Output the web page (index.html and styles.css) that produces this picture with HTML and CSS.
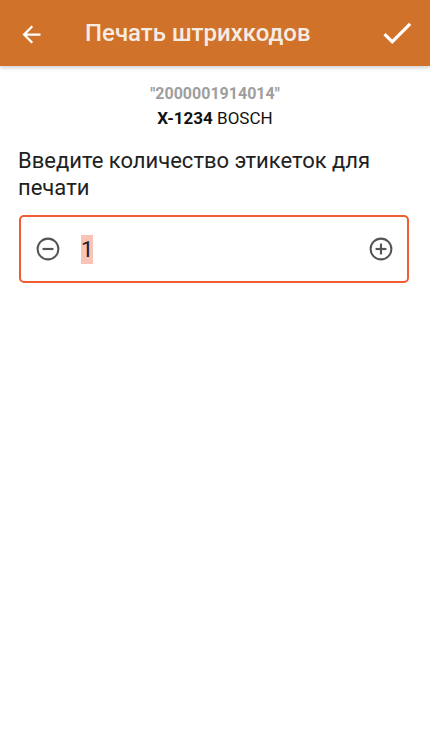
FILE: index.html
```html
<!DOCTYPE html>
<html lang="ru">

<head>
    <meta charset="UTF-8">
    <title>Печать штрихкодов</title>
    <link rel="stylesheet" href="styles.css">
</head>

<body>
    <div class="toolbar">
        <button class="toolbar-btn back-btn" type="button">
            <svg width="27" height="27" viewBox="0 0 24 24">
                <path d="M20 11H7.83l5.59-5.59L12 4l-8 8 8 8 1.41-1.41L7.83 13H20v-2z" fill="#fff" />
            </svg>
        </button>
        <h1 class="toolbar-title">Печать штрихкодов</h1>
        <button class="toolbar-btn ok-btn" type="button">
            <svg width="38" height="38" viewBox="0 0 24 24">
                <path d="M9 16.17L4.83 12l-1.42 1.41L9 19 21 7l-1.41-1.41z" fill="#fff" />
            </svg>
        </button>
    </div>

    <div class="content">
        <div class="product">
            <div class="barcode">"2000001914014"</div>
            <div class="product-name"><b>X-1234</b> BOSCH</div>
        </div>

        <p class="label">Введите количество этикеток для печати</p>

        <div class="counter">
            <!-- minus -->
            <svg class="counter-icon" width="26" height="26" viewBox="0 0 24 24">
                <circle cx="12" cy="12" r="9.6" fill="none" stroke="#555" stroke-width="1.9" />
                <rect x="7" y="11" width="10" height="2" fill="#555" />
            </svg>
            <div class="counter-value"><span class="selected">1</span></div>
            <!-- plus -->
            <svg class="counter-icon" width="26" height="26" viewBox="0 0 24 24">
                <circle cx="12" cy="12" r="9.6" fill="none" stroke="#555" stroke-width="1.9" />
                <rect x="7" y="11" width="10" height="2" fill="#555" />
                <rect x="11" y="7" width="2" height="10" fill="#555" />
            </svg>
        </div>
    </div>
</body>

</html>
```

FILE: styles.css
```css
body {
    margin: 0;
    background: #fff;
    color: #212121;
    font-family: Roboto, "Noto Sans", sans-serif;
}

.toolbar {
    display: flex;
    align-items: center;
    height: 66px;
    background: #d0722a;
    box-shadow: 0 2px 4px rgba(0, 0, 0, 0.18);
}

.toolbar-btn {
    display: flex;
    align-items: center;
    justify-content: center;
    padding: 0;
    border: none;
    background: none;
}

.back-btn {
    width: 27px;
    margin: 2px 0 0 18px;
}

.ok-btn {
    width: 38px;
    margin: 0 14px 0 auto;
}

.toolbar-title {
    margin: 0 0 0 40px;
    font-size: 24px;
    font-weight: 500;
    color: #f6ece4;
}

.content {
    padding: 16px 18px 0 18px;
}

.product {
    text-align: center;
    line-height: 24px;
}

.barcode {
    font-size: 16px;
    color: #9e9e9e;
    font-weight: bold;
}

.product-name {
    font-size: 17px;
    color: #111;
}

.label {
    margin: 17px 0 0 0;
    font-size: 22px;
    line-height: 27px;
    padding-right: 20px;
}

.counter {
    display: flex;
    align-items: center;
    height: 64px;
    margin: 14px 3px 0 1px;
    padding: 0 13px 0 14px;
    border: 2px solid #f25c33;
    border-radius: 5px;
}

.counter-value {
    flex: 1;
    padding-left: 20px;
    font-size: 22px;
    color: #222;
}

.selected {
    display: inline-block;
    line-height: 29px;
    background: #f9c3b5;
}
```
